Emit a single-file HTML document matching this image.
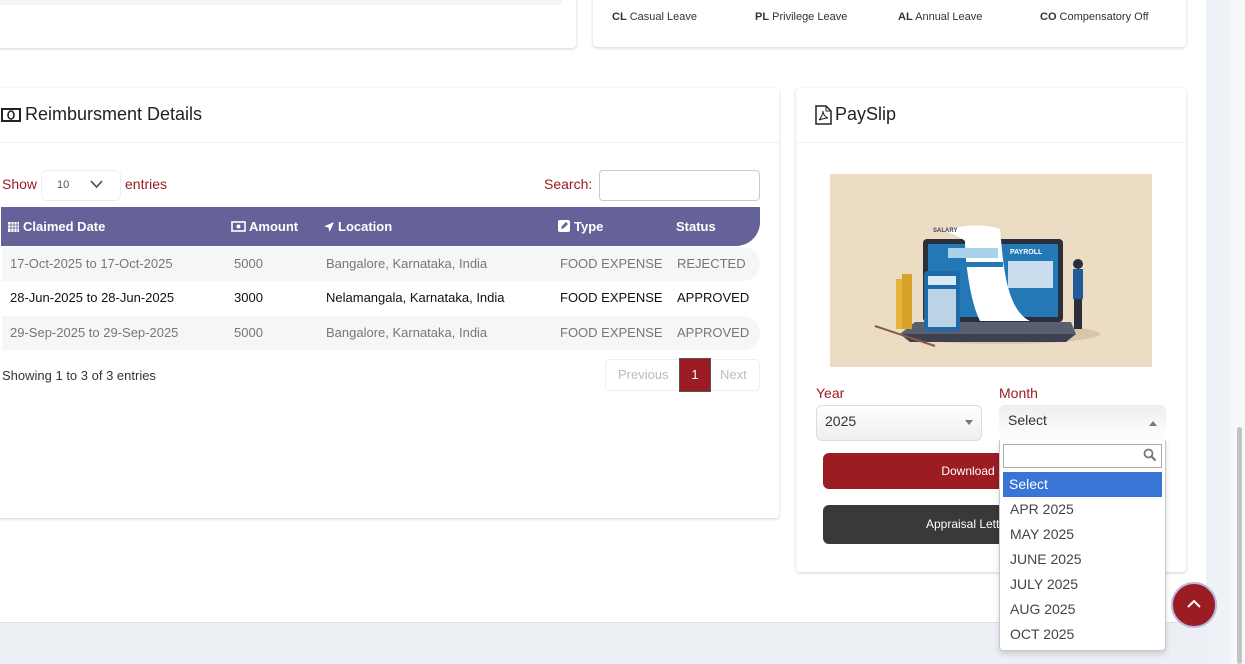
<!DOCTYPE html>
<html><head><meta charset="utf-8"><style>
*{box-sizing:border-box;margin:0;padding:0}
body{width:1245px;height:664px;overflow:hidden;background:#fff;font-family:"Liberation Sans",sans-serif;position:relative;color:#222}
.abs{position:absolute}
.card{position:absolute;background:#fff;border-radius:4px;box-shadow:0 1px 3px rgba(0,0,0,.18)}
.lbl{color:#9b1c22;font-size:14px}
td,th{white-space:nowrap}
.row{position:absolute;left:2px;width:758px;height:34px;font-size:13px;line-height:34px;border-radius:0 17px 17px 0}
.row span{position:absolute}
.opt{position:absolute;left:1010px;font-size:14px;color:#444}
</style></head><body>
<!-- right gray strip -->
<div class="abs" style="left:1206px;top:0;width:25px;height:664px;background:#eef1f6"></div>
<div class="abs" style="left:1231px;top:0;width:14px;height:664px;background:#f7f8fa"></div>
<div class="abs" style="left:1237px;top:427px;width:5px;height:237px;background:#c3c3c6;border-radius:3px"></div>
<!-- bottom gray -->
<div class="abs" style="left:0;top:622px;width:1206px;height:42px;background:#eceff4;border-top:1px solid #dde1e8"></div>

<!-- top cards -->
<div class="card" style="left:-5px;top:-10px;width:581px;height:58px"></div>
<div class="abs" style="left:0;top:0;width:562px;height:5px;background:#f4f5f7"></div>
<div class="card" style="left:593px;top:-10px;width:593px;height:57px"></div>
<div class="abs" style="left:612px;top:11px;font-size:11px;color:#333"><b>CL</b> Casual Leave</div>
<div class="abs" style="left:755px;top:11px;font-size:11px;color:#333"><b>PL</b> Privilege Leave</div>
<div class="abs" style="left:898px;top:11px;font-size:11px;color:#333"><b>AL</b> Annual Leave</div>
<div class="abs" style="left:1040px;top:11px;font-size:11px;color:#333"><b>CO</b> Compensatory Off</div>

<!-- Reimbursement card -->
<div class="card" style="left:-5px;top:88px;width:784px;height:430px"></div>
<div class="abs" style="left:0;top:142px;width:779px;height:1px;background:#eef0f2"></div>
<svg class="abs" style="left:1px;top:107px" width="20" height="16" viewBox="0 0 20 16"><rect x="1" y="2" width="18" height="12" fill="none" stroke="#222" stroke-width="2"/><ellipse cx="10" cy="8" rx="3" ry="4" fill="none" stroke="#222" stroke-width="1.6"/></svg>
<div class="abs" style="left:25px;top:104px;font-size:18px;color:#222">Reimbursment Details</div>
<div class="abs lbl" style="left:2px;top:176px">Show</div>
<div class="abs" style="left:41px;top:170px;width:80px;height:31px;border:1px solid #eee;border-radius:6px;font-size:11px;color:#555;padding:8px 0 0 15px">10</div>
<svg class="abs" style="left:90px;top:180px" width="13" height="9"><path d="M1 1l5.5 6L12 1" fill="none" stroke="#444" stroke-width="1.5"/></svg>
<div class="abs lbl" style="left:125px;top:176px">entries</div>
<div class="abs lbl" style="left:544px;top:176px">Search:</div>
<div class="abs" style="left:599px;top:170px;width:161px;height:31px;border:1px solid #ccc;border-radius:4px"></div>
<!-- header -->
<div class="abs" style="left:1px;top:207px;width:759px;height:39px;background:#65629a;border-radius:0 0 24px 0;color:#fff;font-weight:bold;font-size:13px;line-height:39px">
<svg class="abs" style="left:6px;top:13px" width="13" height="13"><rect x="1" y="2" width="11" height="10" fill="#fff"/><path d="M1 5h11M4 2v10M7 2v10M10 2v10M1 8h11" stroke="#65629a" stroke-width="0.8"/></svg>
<span class="abs" style="left:22px">Claimed Date</span>
<svg class="abs" style="left:230px;top:14px" width="15" height="11"><rect x="1" y="1" width="13" height="9" fill="none" stroke="#fff" stroke-width="1.6"/><circle cx="7.5" cy="5.5" r="2" fill="#fff"/></svg>
<span class="abs" style="left:248px">Amount</span>
<svg class="abs" style="left:322px;top:14px" width="12" height="12"><path d="M11 1L1 5.5l4.5 1 1 4.5z" fill="#fff"/></svg>
<span class="abs" style="left:337px">Location</span>
<svg class="abs" style="left:557px;top:13px" width="12" height="12"><rect x="0" y="0" width="12" height="12" rx="2" fill="#fff"/><path d="M3 9l1-3 4-4 2 2-4 4z" fill="#65629a"/></svg>
<span class="abs" style="left:573px">Type</span>
<span class="abs" style="left:675px">Status</span>
</div>
<div class="row" style="top:247px;background:#f5f6f8;color:#777"><span style="left:8px">17-Oct-2025 to 17-Oct-2025</span><span style="left:232px">5000</span><span style="left:324px">Bangalore, Karnataka, India</span><span style="left:558px">FOOD EXPENSE</span><span style="left:675px">REJECTED</span></div>
<div class="row" style="top:281px;background:#fff;color:#111"><span style="left:8px">28-Jun-2025 to 28-Jun-2025</span><span style="left:232px">3000</span><span style="left:324px">Nelamangala, Karnataka, India</span><span style="left:558px">FOOD EXPENSE</span><span style="left:675px">APPROVED</span></div>
<div class="row" style="top:316px;background:#f5f6f8;color:#777"><span style="left:8px">29-Sep-2025 to 29-Sep-2025</span><span style="left:232px">5000</span><span style="left:324px">Bangalore, Karnataka, India</span><span style="left:558px">FOOD EXPENSE</span><span style="left:675px">APPROVED</span></div>
<div class="abs" style="left:2px;top:368px;font-size:13px;color:#333">Showing 1 to 3 of 3 entries</div>
<div class="abs" style="left:605px;top:359px;width:155px;height:32px;border:1px solid #eee;border-radius:5px"></div>
<div class="abs" style="left:618px;top:367px;font-size:13px;color:#bbb">Previous</div>
<div class="abs" style="left:680px;top:359px;width:30px;height:32px;background:#9b1c22;color:#fff;font-size:13px;text-align:center;line-height:32px;box-shadow:0 0 0 1px #555">1</div>
<div class="abs" style="left:720px;top:367px;font-size:13px;color:#bbb">Next</div>

<!-- Payslip card -->
<div class="card" style="left:796px;top:88px;width:390px;height:484px"></div>
<div class="abs" style="left:796px;top:142px;width:390px;height:1px;background:#eef0f2"></div>
<svg class="abs" style="left:815px;top:105px" width="17" height="20" viewBox="0 0 17 20"><path d="M1 1h10l5 5v13H1z" fill="none" stroke="#222" stroke-width="1.5"/><path d="M11 1v5h5M4 15c2-2 4-6 4-9 0 3 2 6 5 7-3 0-6 1-9 2z" fill="none" stroke="#222" stroke-width="1"/></svg>
<div class="abs" style="left:835px;top:104px;font-size:18px;color:#222">PaySlip</div>
<!-- illustration -->
<svg class="abs" style="left:830px;top:174px" width="322" height="193" viewBox="0 0 322 193">
<rect width="322" height="193" fill="#ecdcc3"/>
<ellipse cx="170" cy="160" rx="100" ry="10" fill="#d8c6a8"/>
<rect x="93" y="65" width="140" height="83" rx="4" fill="#2a2f3c"/>
<rect x="98" y="70" width="130" height="73" fill="#2378b5"/>
<path d="M70 160h176l-10 8H80z" fill="#3d4150"/>
<path d="M85 148h156l5 12H70z" fill="#5a5f70"/>
<path d="M115 57c20-8 45-6 55 -2 3 30 5 80 30 92h-50c-10-20-15-60-15-80-5-4-12-7-20-10z" fill="#fff"/>
<rect x="118" y="74" width="50" height="10" fill="#a9d3ea"/>
<rect x="118" y="88" width="55" height="5" fill="#2378b5"/>
<text x="103" y="58" font-size="6" fill="#445" font-family="Liberation Sans" font-weight="bold">SALARY</text>
<text x="180" y="80" font-size="7" fill="#fff" font-family="Liberation Sans" font-weight="bold">PAYROLL</text>
<rect x="178" y="87" width="45" height="27" fill="#e7f0f8" opacity=".85"/>
<rect x="66" y="105" width="10" height="50" fill="#e9b43a"/>
<rect x="72" y="100" width="10" height="55" fill="#d9a22a"/>
<rect x="94" y="97" width="36" height="60" rx="4" fill="#1f6aa8"/>
<rect x="98" y="102" width="28" height="9" fill="#d7eaf6"/>
<rect x="98" y="115" width="28" height="38" fill="#fff" opacity=".7"/>
<path d="M45 152l60 20" stroke="#8a5a3a" stroke-width="2"/>
<rect x="243" y="95" width="10" height="30" fill="#1f5c99"/>
<rect x="244" y="125" width="8" height="30" fill="#2b2f3c"/>
<circle cx="248" cy="90" r="5" fill="#2b2f3c"/>
</svg>
<div class="abs lbl" style="left:816px;top:385px">Year</div>
<div class="abs lbl" style="left:999px;top:385px">Month</div>
<div class="abs" style="left:816px;top:405px;width:166px;height:36px;border:1px solid #ddd;border-radius:6px;background:linear-gradient(#fff,#eee);font-size:14px;padding:7px 0 0 8px;color:#333">2025</div>
<div class="abs" style="left:965px;top:420px;width:0;height:0;border:4px solid transparent;border-top:5px solid #777"></div>
<div class="abs" style="left:999px;top:405px;width:167px;height:36px;border-radius:6px 6px 0 0;background:linear-gradient(#eee,#fff);font-size:14px;padding:7px 0 0 9px;color:#333">Select</div>
<div class="abs" style="left:1149px;top:417px;width:0;height:0;border:4px solid transparent;border-bottom:5px solid #777"></div>
<div class="abs" style="left:823px;top:453px;width:342px;height:36px;background:#9b1c22;border-radius:6px;color:#fff;font-size:12px;text-align:center;line-height:36px;padding-right:52px">Download</div>
<div class="abs" style="left:823px;top:505px;width:342px;height:39px;background:#3a3838;border-radius:6px;color:#fff;font-size:12px;text-align:center;line-height:39px;padding-right:52px">Appraisal Letter</div>
<!-- dropdown -->
<div class="abs" style="left:999px;top:440px;width:167px;height:211px;background:#fff;border:1px solid #c8c8c8;border-top:none;box-shadow:0 3px 6px rgba(0,0,0,.15);border-radius:0 0 4px 4px"></div>
<div class="abs" style="left:1003px;top:444px;width:159px;height:24px;border:1px solid #aaa"></div>
<svg class="abs" style="left:1143px;top:448px" width="14" height="14"><circle cx="5.5" cy="5.5" r="4" fill="none" stroke="#777" stroke-width="1.8"/><path d="M8.5 8.5l4 4" stroke="#777" stroke-width="2.2"/></svg>
<div class="abs" style="left:1003px;top:472px;width:159px;height:25px;background:#3875d7;color:#fff;font-size:14px;line-height:25px;padding-left:6px">Select</div>
<div class="opt" style="top:501px">APR 2025</div>
<div class="opt" style="top:526px">MAY 2025</div>
<div class="opt" style="top:551px">JUNE 2025</div>
<div class="opt" style="top:576px">JULY 2025</div>
<div class="opt" style="top:601px">AUG 2025</div>
<div class="opt" style="top:626px">OCT 2025</div>
<!-- scroll top btn -->
<div class="abs" style="left:1171px;top:582px;width:46px;height:46px;border-radius:50%;background:#9b1c22;border:2px solid #b9b8e0"></div>
<svg class="abs" style="left:1186px;top:598px" width="16" height="12"><path d="M2 9l6-6 6 6" fill="none" stroke="#fff" stroke-width="2"/></svg>
</body></html>
